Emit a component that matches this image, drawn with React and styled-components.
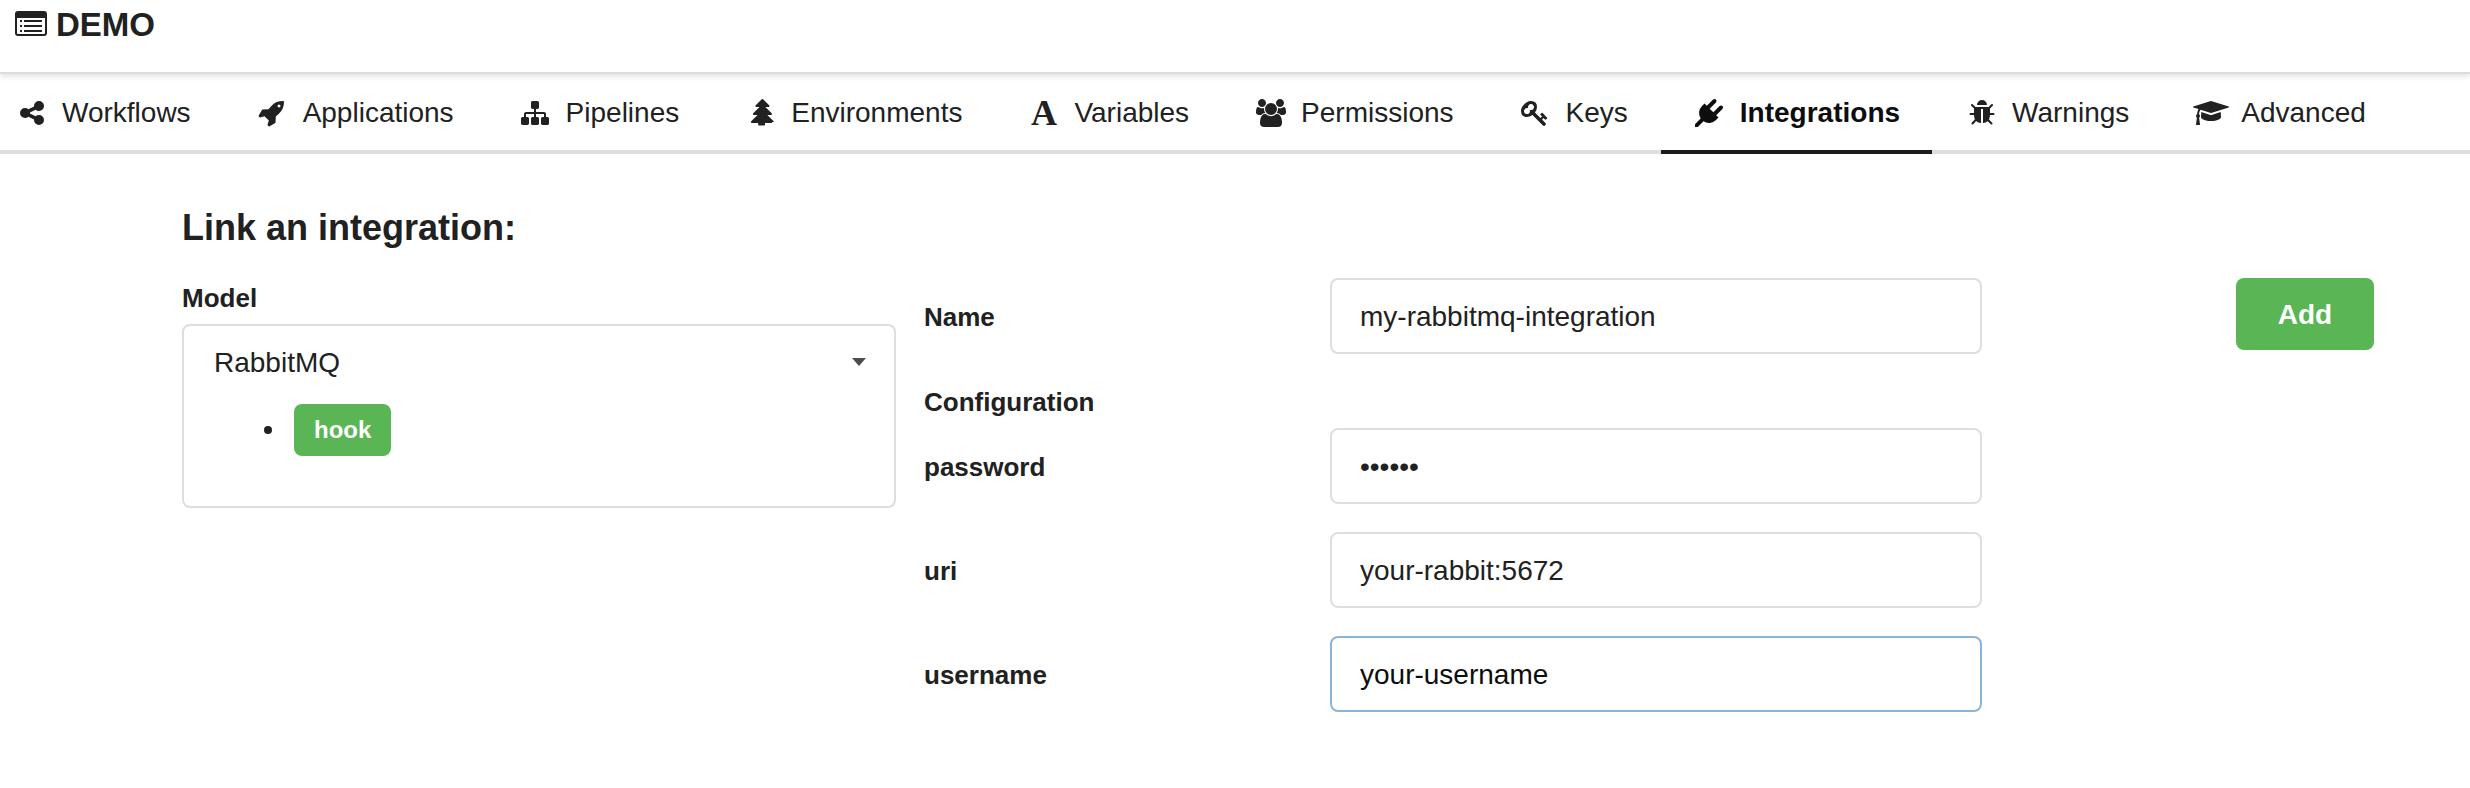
import React from 'react';
import styled, { createGlobalStyle } from 'styled-components';

const GlobalStyle = createGlobalStyle`
  *, *::before, *::after { box-sizing: border-box; }
  body {
    margin: 0;
    background: #fff;
    color: #212121;
    font-family: "Liberation Sans", Arial, sans-serif;
    font-size: 28px;
    line-height: 36px;
  }
  input, select, button { font: inherit; color: inherit; }
`;

const Header = styled.header`
  display: flex;
  align-items: flex-start;
  gap: 9px;
  height: 74px;
  padding: 6px 15px 0;
  border-bottom: 2px solid #dcdcdd;
  box-shadow: 0 2px 6px rgba(34, 36, 38, 0.15);
`;

const ProjectIcon = styled.svg`
  width: 32px;
  height: 25px;
  margin-top: 5px;
  flex: none;
`;

const ProjectName = styled.h1`
  margin: 0;
  font-size: 33px;
  line-height: 37px;
  font-weight: 700;
`;

const TabBar = styled.nav`
  display: flex;
  gap: 1px;
  height: 80px;
  padding-left: 15px;
  border-bottom: 4px solid #dededf;
`;

const Tab = styled.a`
  display: flex;
  align-items: center;
  gap: 14px;
  height: 80px;
  padding: 2px 32px 0;
  border-bottom: 4px solid ${(p) => (p.$active ? '#1b1c1d' : 'transparent')};
  color: ${(p) => (p.$active ? '#0d0d0d' : 'inherit')};
  font-weight: ${(p) => (p.$active ? 700 : 400)};
  text-decoration: none;
  white-space: nowrap;

  &:first-child { padding-left: 0; }
`;

const IconSlot = styled.span`
  display: flex;
  justify-content: center;
  align-items: center;
  flex: none;
  width: 33px;
  height: 28px;

  svg { height: 28px; flex: none; fill: currentColor; }
`;

const LetterIcon = styled.span`
  font-family: "Liberation Serif", "Times New Roman", serif;
  font-size: 36px;
  line-height: 28px;
  font-weight: 700;
`;

const Content = styled.main`
  padding: 51px 96px 76px 182px;
`;

const Title = styled.h2`
  margin: 0 0 27px;
  font-size: 36px;
  line-height: 46px;
  font-weight: 700;
`;

const LinkForm = styled.form`
  display: grid;
  grid-template-columns: 714fr 1058fr 364fr;
  column-gap: 28px;
  align-items: start;
`;

const Label = styled.label`
  padding-top: 2px;
  font-size: 26px;
  line-height: 36px;
  font-weight: 700;
`;

const ModelField = styled.div`
  display: flex;
  flex-direction: column;
  gap: 8px;
`;

const ModelBox = styled.div`
  min-height: 184px;
  border: 2px solid #dededf;
  border-radius: 8px;
`;

const SelectWrap = styled.div`
  position: relative;
`;

const Select = styled.select`
  display: block;
  width: 100%;
  height: 72px;
  padding: 2px 60px 0 30px;
  border: 0;
  border-radius: 8px;
  background: transparent;
  appearance: none;
  outline: none;
`;

const Caret = styled.svg`
  position: absolute;
  top: 32px;
  right: 28px;
  width: 14px;
  height: 8px;
  fill: #4d4d4d;
  pointer-events: none;
`;

const HookList = styled.ul`
  margin: 0;
  padding: 6px 0 0 80px;
  list-style: none;
`;

const HookItem = styled.li`
  display: flex;
  align-items: center;
  gap: 22px;

  &::before {
    content: '';
    width: 8px;
    height: 8px;
    border-radius: 50%;
    background: #212121;
  }
`;

const Tag = styled.span`
  padding: 8px 20px;
  border-radius: 8px;
  background: #5ab655;
  color: #fff;
  font-size: 24px;
  line-height: 36px;
  font-weight: 700;
`;

const Fields = styled.div`
  display: flex;
  flex-direction: column;
`;

const FieldRow = styled.div`
  display: grid;
  grid-template-columns: 378fr 652fr;
  column-gap: 28px;
  align-items: center;

  & + & { margin-top: 28px; }
`;

const SectionLabel = styled.h3`
  margin: 28px 0 8px;
  padding-top: 2px;
  font-size: 26px;
  line-height: 36px;
  font-weight: 700;
`;

const TextInput = styled.input`
  width: 100%;
  height: 76px;
  padding: 2px 28px 0;
  border: 2px solid ${(p) => (p.$highlighted ? '#8cb4d9' : '#dededf')};
  border-radius: 8px;
  background: #fff;
  color: ${(p) => (p.$highlighted ? '#0d0d0d' : '#212121')};
  outline: none;
`;

const AddButton = styled.button`
  justify-self: end;
  width: 138px;
  height: 72px;
  padding: 2px 0 0;
  border: 0;
  border-radius: 8px;
  background: #5ab655;
  color: #fff;
  font-weight: 700;
  cursor: pointer;
`;

const icons = {
  share: [1792, 'M1344 1024q133 0 226.5 93.5t93.5 226.5-93.5 226.5-226.5 93.5-226.5-93.5-93.5-226.5q0-12 2-34l-360-180q-92 86-218 86-133 0-226.5-93.5t-93.5-226.5 93.5-226.5 226.5-93.5q126 0 218 86l360-180q-2-22-2-34 0-133 93.5-226.5t226.5-93.5 226.5 93.5 93.5 226.5-93.5 226.5-226.5 93.5q-126 0-218-86l-360 180q2 22 2 34t-2 34l360 180q92-86 218-86z'],
  rocket: [1792, 'M1440 448q0-40-28-68t-68-28-68 28-28 68 28 68 68 28 68-28 28-68zm224-288q0 249-75.5 430.5t-253.5 360.5q-81 80-195 176l-20 379q-2 16-16 26l-384 224q-7 4-16 4-12 0-23-9l-64-64q-13-14-8-32l85-276-281-281-276 85q-3 1-9 1-14 0-23-9l-64-64q-17-19-5-39l224-384q10-14 26-16l379-20q96-114 176-195 188-187 358-258t431-71q14 0 24 9.5t10 22.5z'],
  sitemap: [1792, 'M1792 1248v320q0 40-28 68t-68 28h-320q-40 0-68-28t-28-68v-320q0-40 28-68t68-28h96v-192h-512v192h96q40 0 68 28t28 68v320q0 40-28 68t-68 28h-320q-40 0-68-28t-28-68v-320q0-40 28-68t68-28h96v-192h-512v192h96q40 0 68 28t28 68v320q0 40-28 68t-68 28h-320q-40 0-68-28t-28-68v-320q0-40 28-68t68-28h96v-192q0-52 38-90t90-38h512v-192h-96q-40 0-68-28t-28-68v-320q0-40 28-68t68-28h320q40 0 68 28t28 68v320q0 40-28 68t-68 28h-96v192h512q52 0 90 38t38 90v192h96q40 0 68 28t28 68z'],
  tree: [1792, 'M1616 1472q0 26-19 45t-45 19h-402q1 16 2.5 48.5t1.5 49.5q0 25-17.5 42.5t-42.5 17.5h-320q-25 0-42.5-17.5t-17.5-42.5q0-16 1.5-49t2.5-49h-402q-26 0-45-19t-19-45 19-45l402-403h-229q-26 0-45-19t-19-45 19-45l402-403h-197q-26 0-45-19t-19-45 19-45l384-384q19-19 45-19t45 19l384 384q19 19 19 45t-19 45-45 19h-197l402 403q19 19 19 45t-19 45-45 19h-229l402 403q19 19 19 45z'],
  users: [1920, 'M593 896q-162 5-265 128h-134q-82 0-138-40.5t-56-118.5q0-353 124-353 6 0 43.5 21t97.5 42.5 119 21.5q67 0 133-23-5 37-5 66 0 139 81 256zm1071 637q0 120-73 189.5t-194 69.5h-874q-121 0-194-69.5t-73-189.5q0-53 3.5-103.5t14-109 26.5-108.5 43-97.5 62-81 85.5-53.5 111.5-20q10 0 43 21.5t73 48 107 48 135 21.5 135-21.5 107-48 73-48 43-21.5q61 0 111.5 20t85.5 53.5 62 81 43 97.5 26.5 108.5 14 109 3.5 103.5zm-1024-1277q0 106-75 181t-181 75-181-75-75-181 75-181 181-75 181 75 75 181zm704 384q0 159-112.5 271.5t-271.5 112.5-271.5-112.5-112.5-271.5 112.5-271.5 271.5-112.5 271.5 112.5 112.5 271.5zm576 225q0 78-56 118.5t-138 40.5h-134q-103-123-265-128 81-117 81-256 0-29-5-66 66 23 133 23 59 0 119-21.5t97.5-42.5 43.5-21q124 0 124 353zm-128-609q0 106-75 181t-181 75-181-75-75-181 75-181 181-75 181 75 75 181z'],
  key: [1792, 'M832 512q0-80-56-136t-136-56-136 56-56 136q0 42 19 83-41-19-83-19-80 0-136 56t-56 136 56 136 136 56 136-56 56-136q0-42-19-83 41 19 83 19 80 0 136-56t56-136zm851 704q0 17-49 66t-66 49q-9 0-28.5-16t-36.5-33-38.5-40-24.5-26l-96 96 220 220q28 28 28 68 0 42-39 81t-81 39q-40 0-68-28l-671-671q-176 131-365 131-163 0-265.5-102.5t-102.5-265.5q0-160 95-313t248-248 313-95q163 0 265.5 102.5t102.5 265.5q0 189-131 365l355 355 96-96q-3-3-26-24.5t-40-38.5-33-36.5-16-28.5q0-17 49-66t66-49q13 0 23 10 6 6 46 44.5t82 79.5 86.5 86 73 78 28.5 41z'],
  plug: [1792, 'M1755 453q37 38 37 90.5t-37 90.5l-401 400 150 150-160 160q-163 163-389.5 186.5t-411.5-100.5l-362 362h-181v-181l362-362q-124-185-100.5-411.5t186.5-389.5l160-160 150 150 400-401q38-37 91-37t90 37 37 90.5-37 90.5l-400 401 234 234 401-400q38-37 91-37t90 37z'],
  bug: [1792, 'M1696 960q0 26-19 45t-45 19h-224q0 171-67 290l208 209q19 19 19 45t-19 45q-18 19-45 19t-45-19l-198-197q-5 5-15 13t-42 28.5-65 36.5-82 29-97 13v-896h-128v896q-51 0-101.5-13.5t-87-33-66-39-43.5-32.5l-15-14-183 207q-20 21-48 21-24 0-43-16-19-18-20.5-44.5t15.5-46.5l202-227q-58-114-58-274h-224q-26 0-45-19t-19-45 19-45 45-19h224v-294l-173-173q-19-19-19-45t19-45 45-19 45 19l173 173h844l173-173q19-19 45-19t45 19 19 45-19 45l-173 173v294h224q26 0 45 19t19 45zm-480-576h-640q0-133 93.5-226.5t226.5-93.5 226.5 93.5 93.5 226.5z'],
  cap: [2304, 'M1774 836l18 316q4 69-82 128t-235 93.5-323 34.5-323-34.5-235-93.5-82-128l18-316 574 181q22 7 48 7t48-7zm530-324q0 23-22 31l-1120 352q-4 1-10 1t-10-1l-652-206q-43 34-71 111.5t-34 178.5q63 36 63 109 0 69-58 107l58 433q2 14-8 25-9 11-24 11h-192q-15 0-24-11-10-11-8-25l58-433q-58-38-58-107 0-73 65-111 11-207 98-330l-333-104q-22-8-22-31t22-31l1120-352q4-1 10-1t10 1l1120 352q22 8 22 31z'],
};

const tabs = [
  { name: 'Workflows', icon: 'share' },
  { name: 'Applications', icon: 'rocket' },
  { name: 'Pipelines', icon: 'sitemap' },
  { name: 'Environments', icon: 'tree' },
  { name: 'Variables', letter: 'A' },
  { name: 'Permissions', icon: 'users' },
  { name: 'Keys', icon: 'key' },
  { name: 'Integrations', icon: 'plug', active: true },
  { name: 'Warnings', icon: 'bug' },
  { name: 'Advanced', icon: 'cap' },
];

function TabIcon({ icon, letter }) {
  if (letter) {
    return (
      <IconSlot aria-hidden="true">
        <LetterIcon>{letter}</LetterIcon>
      </IconSlot>
    );
  }
  const [width, path] = icons[icon];
  return (
    <IconSlot aria-hidden="true">
      <svg viewBox={`0 0 ${width} 1792`}>
        <path d={path} />
      </svg>
    </IconSlot>
  );
}

function Field({ id, label, ...input }) {
  return (
    <FieldRow>
      <Label htmlFor={id}>{label}</Label>
      <TextInput id={id} {...input} />
    </FieldRow>
  );
}

export default function App() {
  return (
    <>
      <GlobalStyle />
      <Header>
        <ProjectIcon viewBox="0 0 32 25" aria-hidden="true">
          <path
            fill="#212121"
            fillRule="evenodd"
            d="M3 0h26a3 3 0 0 1 3 3v19a3 3 0 0 1-3 3H3a3 3 0 0 1-3-3V3a3 3 0 0 1 3-3zM2 7v15a1 1 0 0 0 1 1h26a1 1 0 0 0 1-1V7z"
          />
          <path
            fill="#212121"
            d="M5 9h2v2H5zM5 14h2v2H5zM5 19h2v2H5zM9 9h18v2H9zM9 14h18v2H9zM9 19h18v2H9z"
          />
        </ProjectIcon>
        <ProjectName>DEMO</ProjectName>
      </Header>
      <TabBar>
        {tabs.map((tab) => (
          <Tab
            key={tab.name}
            href={`#${tab.name.toLowerCase()}`}
            $active={tab.active}
            aria-current={tab.active ? 'page' : undefined}
          >
            <TabIcon icon={tab.icon} letter={tab.letter} />
            {tab.name}
          </Tab>
        ))}
      </TabBar>
      <Content>
        <Title>Link an integration:</Title>
        <LinkForm onSubmit={(e) => e.preventDefault()}>
          <ModelField>
            <Label htmlFor="model">Model</Label>
            <ModelBox>
              <SelectWrap>
                <Select id="model" defaultValue="RabbitMQ">
                  <option>RabbitMQ</option>
                </Select>
                <Caret viewBox="0 0 14 8" aria-hidden="true">
                  <path d="M0 0h14L7 8z" />
                </Caret>
              </SelectWrap>
              <HookList>
                <HookItem>
                  <Tag>hook</Tag>
                </HookItem>
              </HookList>
            </ModelBox>
          </ModelField>
          <Fields>
            <Field id="name" label="Name" type="text" defaultValue="my-rabbitmq-integration" />
            <SectionLabel>Configuration</SectionLabel>
            <Field id="password" label="password" type="password" defaultValue="secret" />
            <Field id="uri" label="uri" type="text" defaultValue="your-rabbit:5672" />
            <Field id="username" label="username" type="text" defaultValue="your-username" $highlighted />
          </Fields>
          <AddButton type="submit">Add</AddButton>
        </LinkForm>
      </Content>
    </>
  );
}
